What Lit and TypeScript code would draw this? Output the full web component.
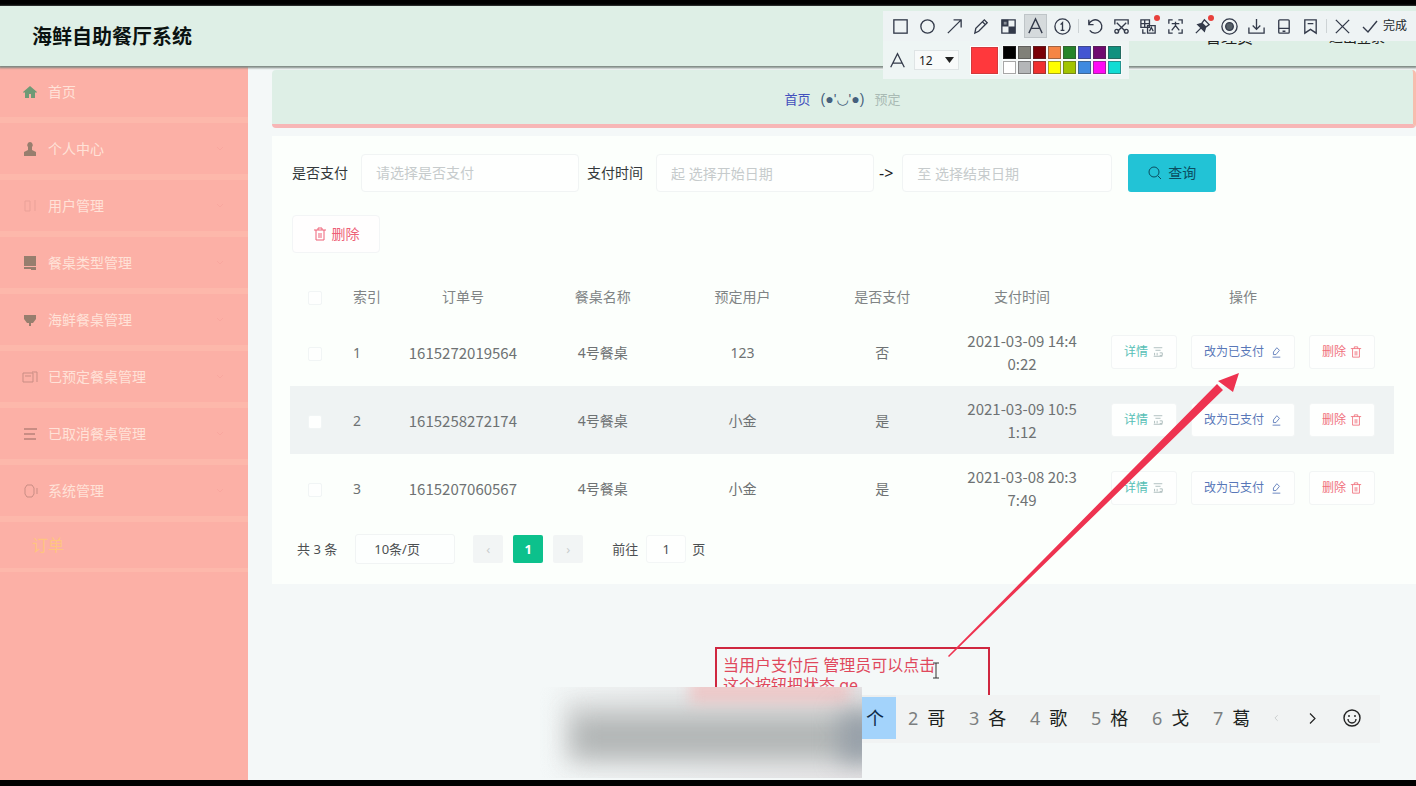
import { LitElement, html, css, svg } from "lit";
import { customElement } from "lit/decorators.js";
import { styleMap } from "lit/directives/style-map.js";

const menuItems = [
  { text: "首页", icon: svg`<path d="M1 8 8 2l7 6-1 1-1-1v6H9v-4H7v4H3V8L2 9z" fill="currentColor"/>`, tone: "green" },
  { text: "个人中心", icon: svg`<path d="M8 1a3 3 0 0 1 2 5v3l4 2v4H2v-4l4-2V6a3 3 0 0 1 2-5z" fill="currentColor"/>`, tone: "dark" },
  { text: "用户管理", icon: svg`<path d="M3 3h5v10H3zM13 2v11" fill="none" stroke="currentColor"/>`, tone: "faint" },
  { text: "餐桌类型管理", icon: svg`<path d="M2 1h12v10H2zM2 12h12v3H9v-1H2z" fill="currentColor"/>`, tone: "dark" },
  { text: "海鲜餐桌管理", icon: svg`<path d="M2 3h12v4l-3 4H9v3H7v-3H5L2 7z" fill="currentColor"/>`, tone: "dark" },
  { text: "已预定餐桌管理", icon: svg`<path d="M1 4h10v9H1zM3 7h6M10 3h5v10" fill="none" stroke="currentColor"/>`, tone: "mid" },
  { text: "已取消餐桌管理", icon: svg`<path d="M2 3h13M2 8h11M2 13h12" fill="none" stroke="currentColor" stroke-width="2"/>`, tone: "mid" },
  { text: "系统管理", icon: svg`<path d="M5 2h5l2 3v6l-2 3H5l-2-3V5zM15 5v6" fill="none" stroke="currentColor"/>`, tone: "mid" },
];

const orders = [
  { id: 1, no: "1615272019564", table: "4号餐桌", user: "123", paid: "否", time: "2021-03-09 14:40:22" },
  { id: 2, no: "1615258272174", table: "4号餐桌", user: "小金", paid: "是", time: "2021-03-09 10:51:12" },
  { id: 3, no: "1615207060567", table: "4号餐桌", user: "小金", paid: "是", time: "2021-03-08 20:37:49" },
];

const palette = [
  "#000000", "#808078", "#7a0006", "#f58545", "#25842a", "#4355d2", "#700a70", "#10917f",
  "#ffffff", "#b4b6b8", "#f0302f", "#ffff00", "#a2c400", "#3f8ae0", "#ff0af5", "#10dcd4",
];

const trash = html`<svg class="ico" viewBox="0 0 14 14" aria-hidden="true"><path d="M1 3h12M5 3V1h4v2M3 3v10h8V3M6 6v5M8 6v5" /></svg>`;
const doc = html`<svg class="ico grey" viewBox="0 0 14 14" aria-hidden="true"><path d="M2 2h10M4 5h6M3 8v3M6 8v3M9 8h3v3H9M2 12h10" /></svg>`;
const pen = html`<svg class="ico" viewBox="0 0 14 14" aria-hidden="true"><path d="M4 7l4-5 3 3-4 5H4zM3 13h9" /></svg>`;

const tools = [
  { name: "矩形", art: svg`<rect x="3" y="3" width="14" height="14"/>` },
  { name: "椭圆", art: svg`<circle cx="10" cy="10" r="7"/>` },
  { name: "箭头", art: svg`<path d="M3 17 17 3M9 3h8v8"/>` },
  { name: "画笔", art: svg`<path d="M3 17l1-5 9-9 3 3-9 9zM11 5l3 3"/>` },
  { name: "马赛克", art: svg`<path d="M3 3h14v14H3z"/><path d="M3 3h7v7H3zM10 10h7v7h-7z" fill="#333a4a" stroke="none"/><path d="M5 5h3v3H5z" fill="#8a9098" stroke="none"/>` },
  { name: "文字", art: svg`<path d="M3 17 10 2l7 15M6 12h8"/>`, active: true },
  { name: "序号", art: svg`<circle cx="10" cy="10" r="8"/><path d="M8 8l2-2v8M8 14h4"/>` },
  null,
  { name: "撤销", art: svg`<path d="M4 3v5h5M4 8a7 7 0 1 1 1 6"/>` },
  { name: "裁剪", art: svg`<path d="M3 8V3h14v5M5 6l9 9M15 6l-9 9"/><circle cx="5" cy="15" r="2"/><circle cx="15" cy="15" r="2"/>` },
  { name: "翻译", art: svg`<path d="M2 3h9v8H2zM2 7h9M6 3v8M9 9h8v8H9zM11 15l2-4 2 4M4 13v4h3"/>`, dot: true },
  { name: "识别", art: svg`<path d="M3 7V3h4M13 3h4v4M17 13v4h-4M7 17H3v-4M6 7h8M10 5v4M6 14l4-5 4 5"/>` },
  { name: "钉住", art: svg`<path d="M3 17l5-5M5 8l7 7 1-4 4-3-5-5-3 4z"/><path d="M6 8l6 6 1-4-3-3z" fill="#333a4a"/>`, dot: true },
  { name: "录制", art: svg`<circle cx="10" cy="10" r="8"/><circle cx="10" cy="10" r="4" fill="#566068"/>` },
  { name: "保存", art: svg`<path d="M2 11v6h16v-6M10 2v11M6 9l4 4 4-4"/>` },
  { name: "手机", art: svg`<rect x="5" y="3" width="11" height="14" rx="1"/><path d="M5 12h11M9 15h3"/>` },
  { name: "收藏", art: svg`<path d="M4 3h12v14l-6-4-6 4zM7 7h6"/>` },
  null,
  { name: "取消", art: svg`<path d="M3 3l14 14M17 3 3 17"/>` },
];

const candidates = ["哥", "各", "歌", "格", "戈", "葛"];

@customElement("app-root")
export class AppRoot extends LitElement {
  static styles = css`
    :host {
      display: block;
      position: relative;
      overflow: hidden;
      font: 14px/20px "Noto Sans", "Noto Sans CJK SC", sans-serif;
      color: #4c5052;
    }
    * { box-sizing: border-box; }
    button, input, select { font: inherit; color: inherit; margin: 0; }
    button { cursor: pointer; }
    svg { display: block; fill: none; }

    .page {
      display: flex;
      flex-direction: column;
      min-height: 100vh;
      border-top: 6px solid #000;
      border-bottom: 6px solid #000;
      background: #f4f8f8;
    }
    .header {
      position: relative;
      display: flex;
      align-items: center;
      height: 60px;
      padding: 1px 31px 0 32px;
      background: #deefe6;
      box-shadow: 0 1px 2px 1px #7c8782;
    }
    .brand { margin: 0; font-size: 20px; line-height: 28px; font-weight: 700; color: #0a1210; flex: 1; }
    .account { display: flex; gap: 76px; color: #222; }
    .account a { color: inherit; text-decoration: none; }
    .account .user { font-size: 16px; }

    .body { display: flex; flex: 1; }
    .side { width: 248px; flex: none; background: #fcb0a6; }
    .menu { list-style: none; margin: 0; padding: 0; }
    .menu-link {
      display: flex;
      align-items: center;
      gap: 10px;
      height: 57px;
      padding: 0 24px 0 22px;
      border-bottom: 6px solid #fdb8ab;
      color: #ffe2d8;
      text-decoration: none;
    }
    .menu-text { flex: 1; }
    .menu-icon { width: 16px; height: 16px; }
    .green { color: #6f9a76; }
    .dark { color: #977e6e; }
    .mid { color: #c98d84; }
    .faint { color: #eaa198; }
    .arrow { width: 8px; height: 8px; stroke: #f9a79f; }
    .sub { height: 50px; padding: 0 32px; border-bottom-width: 4px; color: #ffc480; font-size: 16px; }

    .main { flex: 1; min-width: 0; padding: 4px 0 0 24px; }
    .crumb {
      display: flex;
      justify-content: center;
      align-items: center;
      gap: 10px;
      height: 58px;
      padding-top: 4px;
      background: #deefe6;
      border-right: 3px solid #f8bcae;
      border-bottom: 4px solid #f7b6b6;
      border-radius: 4px;
      font-size: 13px;
      color: #a9bab4;
    }
    .crumb a { color: #4350bd; text-decoration: none; }
    .face { color: #45607c; font-family: "Liberation Sans", "DejaVu Sans", sans-serif; font-size: 14px; }

    .card { margin-top: 8px; padding: 18px 22px 20px 18px; background: #fcfffc; }
    .filters { display: flex; align-items: center; color: #33383a; }
    .field {
      width: 218px;
      height: 38px;
      margin: 0 8px 0 13px;
      padding: 0 14px;
      border: 1px solid #f1f4f4;
      border-radius: 4px;
      background: #fefffe;
      color: #c6cbcc;
      appearance: none;
    }
    .field::placeholder { color: #c6cbcc; opacity: 1; }
    .from { margin-right: 5px; }
    .until { font-size: 16px; color: #222; }
    .to { margin-left: 9px; width: 210px; }
    .label-first { padding-left: 2px; }
    .search {
      display: flex;
      align-items: center;
      justify-content: center;
      gap: 6px;
      width: 88px;
      height: 38px;
      margin-left: 8px;
      border: 0;
      border-radius: 3px;
      background: #22c3d6;
      color: #0b4d60;
    }
    .ico { width: 14px; height: 14px; stroke: currentColor; }
    .grey { color: #a6b8b8; }
    .bulk {
      display: flex;
      align-items: center;
      justify-content: center;
      gap: 5px;
      width: 88px;
      height: 38px;
      margin: 23px 0 23px 2px;
      border: 1px solid #f3f5f6;
      border-radius: 4px;
      background: #fffefe;
      color: #ee6076;
    }

    table { width: 100%; border-collapse: collapse; table-layout: fixed; }
    th, td { padding: 0 14px; text-align: center; font-weight: 400; color: #6e7273; }
    th { height: 42px; color: #808485; }
    td { height: 68px; line-height: 23px; word-break: break-all; }
    td.num { font-family: "Noto Sans CJK SC", sans-serif; font-size: 15px; }
    tr.band td { background: #eff3f3; }
    .c-check { width: 50px; }
    .c-index { width: 53px; }
    .c-act { width: 302px; }
    th.tight, td.tight { padding: 0; }
    th.idx, td.idx { padding: 0 0 0 13px; text-align: left; }
    .tick { appearance: none; display: inline-block; vertical-align: middle; width: 14px; height: 14px; margin: 0; border: 1px solid #f1f5f5; border-radius: 2px; background: #fefffe; }
    .acts { display: flex; justify-content: center; gap: 14px; }
    .act {
      display: flex;
      align-items: center;
      gap: 4px;
      height: 34px;
      padding: 0 12px;
      border: 1px solid #f2f5f5;
      border-radius: 3px;
      background: #fefffe;
      font-size: 12px;
      line-height: 16px;
      white-space: nowrap;
    }
    .act .ico { width: 12px; height: 12px; }
    .view { color: #58bfb6; }
    .paid { color: #5877b8; gap: 6px; }
    .del { color: #f0707c; }

    .pager { display: flex; align-items: center; margin-top: 12px; padding-left: 7px; font-size: 13px; }
    .size { width: 100px; height: 30px; margin: 0 18px; padding: 0 18px; appearance: none; border: 1px solid #f1f4f4; border-radius: 3px; background: #fdfffe; }
    .pg { width: 30px; height: 28px; margin-right: 10px; padding: 0; border: 0; border-radius: 2px; background: #f2f5f5; color: #c9cdce; }
    .pg.on { background: #0cc18c; color: #fff; font-weight: 700; }
    .jump { width: 40px; height: 28px; margin: 0 6px 0 8px; padding: 0; text-align: center; border: 1px solid #f3f6f6; border-radius: 3px; background: #fefffe; }
    .jump-label { margin-left: 19px; }

    /* floating capture toolbar */
    .capture { position: absolute; top: 11px; right: 0; display: flex; flex-direction: column; align-items: flex-start; }
    .bar { display: flex; align-items: center; height: 30px; padding: 0 9px 0 4px; background: #eef3f4; }
    .tool { position: relative; width: 27px; height: 24px; padding: 2px 4px; border: 0; background: none; }
    .tool svg { width: 19px; height: 19px; stroke: #333a4a; stroke-width: 1.4; }
    .tool.active::before { content: ""; position: absolute; inset: 0 2px; background: #d5dadc; border: 1px solid #bfc5c8; }
    .tool.active svg { position: relative; }
    .dot { position: absolute; top: 1px; right: 2px; width: 6px; height: 6px; border-radius: 50%; background: #e8403c; }
    .sep { width: 1px; height: 14px; margin: 0 2px; background: #cdd3d5; }
    .done { display: flex; align-items: center; gap: 5px; padding: 0 0 0 6px; border: 0; background: none; font-size: 12px; color: #22282c; }
    .done svg { width: 16px; height: 16px; stroke: #333a4a; stroke-width: 1.4; }
    .options { display: flex; align-items: center; height: 38px; padding: 0 7px 0 6px; background: #eef5f4; }
    .options .glyph { width: 17px; height: 17px; stroke: #333a4a; stroke-width: 1.5; }
    .fontbox { position: relative; display: flex; align-items: center; margin: 0 12px 0 8px; }
    .fontsize { width: 45px; height: 20px; padding: 0 4px; appearance: none; border: 1px solid #dfe4e5; background: #f8fafa; font-size: 12px; color: #222; }
    .caret { position: absolute; right: 5px; width: 9px; height: 6px; fill: #222; pointer-events: none; }
    .current { width: 27px; height: 27px; margin-right: 4px; border: 1px solid #d3393d; background: #ff383c; outline: 1px solid #fff; padding: 0; }
    .palette { display: grid; grid-template-columns: repeat(8, 13px); gap: 2px; padding: 1px; background: #f7fafa; }
    .swatch { height: 13px; padding: 0; border: 1px solid rgba(60, 60, 60, 0.45); }

    /* marks placed freely over the page */
    .arrow-mark { position: absolute; left: 940px; top: 366px; width: 304px; height: 296px; fill: #ee3350; pointer-events: none; }
    .note { position: absolute; left: 715px; top: 647px; width: 275px; height: 48px; padding: 6px; border: 2px solid #cf2740; border-bottom: 0; color: #e0485c; font-size: 16px; line-height: 20px; }
    .note p { margin: 0; white-space: nowrap; }
    .cursor { position: absolute; left: 931px; top: 662px; width: 10px; height: 17px; stroke: #333; }
    .haze { position: absolute; left: 540px; top: 687px; width: 322px; height: 91px; overflow: hidden; background: linear-gradient(to right, transparent, #eceeef 50%, #e6e4e6); }
    .haze i { position: absolute; filter: blur(12px); }
    .haze .base { inset: 12px -20px 14px 24px; background: #d9dbdb; }
    .haze .rose { left: 150px; top: -10px; width: 160px; height: 28px; background: #edcaca; filter: blur(7px); }
    .haze .core { inset: 31px -10px 22px 34px; background: #b0b4b4; }
    .haze .edge { left: 300px; top: 26px; width: 40px; height: 48px; background: #969fa8; }
    .ime { position: absolute; left: 862px; top: 695px; display: flex; align-items: center; height: 48px; padding-right: 10px; background: #f1f3f3; font-size: 18px; line-height: 24px; color: #1b1f20; }
    .pick { align-self: flex-start; width: 34px; height: 44px; padding: 0 12px 0 4px; border: 0; border-top: 2px solid #eceeee; background: #a3d3fb; color: #0c2a48; }
    .cand { display: flex; gap: 9px; width: 61px; padding: 0 0 2px 12px; border: 0; background: none; }
    .cand span { color: #7c7f80; }
    .nav { width: 37px; height: 40px; padding: 0 0 2px; border: 0; background: none; color: #222; }
    .nav svg { width: 18px; height: 18px; margin: 0 auto; stroke: currentColor; stroke-width: 1.4; }
    .nav.off { color: #c0c4c4; margin-left: -5px; }
    .nav.next svg { width: 15px; height: 15px; }
    .nav.off svg { width: 10px; }
    .nav.smile { margin-left: 2px; }
  `;

  render() {
    return html`
      <div class="page">
        <header class="header">
          <h1 class="brand">海鲜自助餐厅系统</h1>
          <nav class="account"><a class="user" href="#admin">管理员</a><a href="#logout">退出登录</a></nav>
        </header>
        <div class="body">
          <nav class="side">
            <ul class="menu">
              ${menuItems.map((m, i) => html`<li>
                <a class="menu-link" href="#m${i}">
                  <svg class="menu-icon ${m.tone}" viewBox="0 0 16 16" aria-hidden="true">${m.icon}</svg>
                  <span class="menu-text">${m.text}</span>
                  ${i ? html`<svg class="arrow" viewBox="0 0 8 8" aria-hidden="true"><path d="M1 2l3 3 3-3" /></svg>` : ""}
                </a>
              </li>`)}
              <li><a class="menu-link sub" href="#orders">订单</a></li>
            </ul>
          </nav>
          <main class="main">
            <div class="crumb"><a href="#home">首页</a><span class="face">(●'◡'●)</span><span>预定</span></div>
            <section class="card">
              <form class="filters" @submit=${(e: Event) => e.preventDefault()}>
                <label class="label-first" for="paid">是否支付</label>
                <select class="field" id="paid"><option>请选择是否支付</option></select>
                <label for="from">支付时间</label>
                <input class="field from" id="from" placeholder="起 选择开始日期" />
                <label class="until" for="to">-&gt;</label>
                <input class="field to" id="to" placeholder="至 选择结束日期" />
                <button class="search"><svg class="ico" viewBox="0 0 14 14" aria-hidden="true"><circle cx="6" cy="6" r="5" /><path d="M10 10l3 3" /></svg>查询</button>
              </form>
              <button class="bulk">${trash}删除</button>
              <table>
                <colgroup><col class="c-check" /><col class="c-index" /><col /><col /><col /><col /><col /><col class="c-act" /></colgroup>
                <thead><tr>
                  <th class="tight"><input class="tick" type="checkbox" aria-label="全选" /></th>
                  <th class="idx">索引</th><th>订单号</th><th>餐桌名称</th><th>预定用户</th><th>是否支付</th><th>支付时间</th><th>操作</th>
                </tr></thead>
                <tbody>
                  ${orders.map((o, i) => html`<tr class=${i % 2 ? "band" : ""}>
                    <td class="tight"><input class="tick" type="checkbox" aria-label="选择 ${o.id}" /></td>
                    <td class="idx">${o.id}</td>
                    <td class="num">${o.no}</td>
                    <td>${o.table}</td><td>${o.user}</td><td>${o.paid}</td>
                    <td class="num">${o.time}</td>
                    <td class="tight"><div class="acts">
                      <button class="act view">详情${doc}</button>
                      <button class="act paid">改为已支付${pen}</button>
                      <button class="act del">删除${trash}</button>
                    </div></td>
                  </tr>`)}
                </tbody>
              </table>
              <div class="pager">
                <span>共 3 条</span>
                <select class="size" aria-label="每页条数"><option>10条/页</option></select>
                <button class="pg" aria-label="上一页">‹</button>
                <button class="pg on">1</button>
                <button class="pg" aria-label="下一页">›</button>
                <label class="jump-label" for="jump">前往</label>
                <input class="jump" id="jump" value="1" />
                <span>页</span>
              </div>
            </section>
          </main>
        </div>
      </div>

      <div class="capture">
        <div class="bar">
          ${tools.map((t) => t
            ? html`<button class="tool ${t.active ? "active" : ""}" aria-label=${t.name}>
                <svg viewBox="0 0 20 20">${t.art}</svg>${t.dot ? html`<i class="dot"></i>` : ""}
              </button>`
            : html`<span class="sep"></span>`)}
          <button class="done"><svg viewBox="0 0 16 16" aria-hidden="true"><path d="M1 9l5 5L15 3" /></svg>完成</button>
        </div>
        <div class="options">
          <svg class="glyph" viewBox="0 0 20 20" aria-hidden="true"><path d="M2 18 10 2l8 16M5 13h10" /></svg>
          <span class="fontbox">
            <select class="fontsize" aria-label="字号"><option>12</option></select>
            <svg class="caret" viewBox="0 0 9 6" aria-hidden="true"><path d="M0 0h9L4.500 6z" /></svg>
          </span>
          <button class="current" aria-label="当前颜色"></button>
          <div class="palette">
            ${palette.map((c) => html`<button class="swatch" aria-label=${c} style=${styleMap({ background: c })}></button>`)}
          </div>
        </div>
      </div>

      <div class="note"><p>当用户支付后 管理员可以点击</p><p>这个按钮把状态 ge</p></div>
      <svg class="arrow-mark" viewBox="0 0 304 296" aria-hidden="true"><path d="M8 290 277 18 283 24 9 291zM278 15 299 7 293 26z" /></svg>
      <svg class="cursor" viewBox="0 0 10 17" aria-hidden="true"><path d="M2 1h6M5 1v15M2 16h6" /></svg>
      <div class="haze"><i class="base"></i><i class="rose"></i><i class="core"></i><i class="edge"></i></div>
      <div class="ime">
        <button class="pick">个</button>
        ${candidates.map((c, i) => html`<button class="cand"><span>${i + 2}</span>${c}</button>`)}
        <button class="nav off" aria-label="上一组"><svg viewBox="0 0 18 18"><path d="M12 4 7 9l5 5" /></svg></button>
        <button class="nav next" aria-label="下一组"><svg viewBox="0 0 18 18"><path d="M6 3l6 6-6 6" /></svg></button>
        <button class="nav smile" aria-label="表情"><svg viewBox="0 0 18 18"><circle cx="9" cy="9" r="8" /><path d="M5 10a4 4 0 0 0 8 0M6 6v2M12 6v2" /></svg></button>
      </div>
    `;
  }
}
